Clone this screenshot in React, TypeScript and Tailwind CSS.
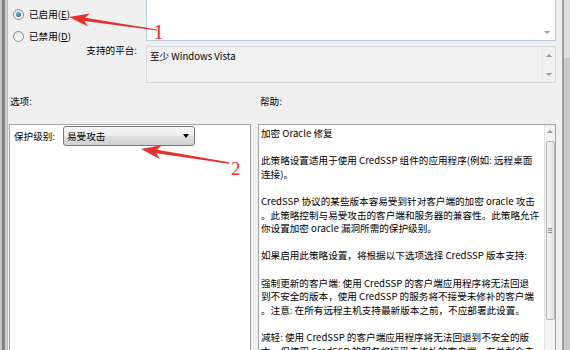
import type { ReactNode } from "react";

const helpLines: string[] = [
  "加密 Oracle 修复",
  "",
  "此策略设置适用于使用 CredSSP 组件的应用程序(例如: 远程桌面",
  "连接)。",
  "",
  "CredSSP 协议的某些版本容易受到针对客户端的加密 oracle 攻击",
  "。此策略控制与易受攻击的客户端和服务器的兼容性。此策略允许",
  "你设置加密 oracle 漏洞所需的保护级别。",
  "",
  "如果启用此策略设置，将根据以下选项选择 CredSSP 版本支持:",
  "",
  "强制更新的客户端: 使用 CredSSP 的客户端应用程序将无法回退",
  "到不安全的版本，使用 CredSSP 的服务将不接受未修补的客户端",
  "。注意: 在所有远程主机支持最新版本之前，不应部署此设置。",
  "",
  "减轻: 使用 CredSSP 的客户端应用程序将无法回退到不安全的版",
  "本，但使用 CredSSP 的服务将接受未修补的客户端。有关剩余未",
];

// tiny scrollbar arrows
const ArrowUp = () => (
  <div className="h-0 w-0 border-x-[3px] border-b-[3px] border-x-transparent border-b-[#9a9a9a]" />
);
const ArrowDown = () => (
  <div className="h-0 w-0 border-x-[3px] border-t-[3px] border-x-transparent border-t-[#9a9a9a]" />
);

function Radio({ checked, children }: { checked?: boolean; children: ReactNode }) {
  return (
    <div className="flex h-[22px] items-center gap-[5px]">
      <div className="flex h-[11px] w-[11px] items-center justify-center rounded-full border border-[#8c8c8c] bg-[linear-gradient(to_bottom,#e6e6e6,#fbfbfb)]">
        {checked && (
          <div className="h-[5px] w-[5px] rounded-full bg-[radial-gradient(circle_at_40%_35%,#6fb3e6,#1d5e9e)]" />
        )}
      </div>
      <span>{children}</span>
    </div>
  );
}

export default function App() {
  return (
    <div className="relative flex h-[350px] w-[570px] overflow-hidden bg-[#f0f0f0] font-['Noto_Sans_CJK_SC',sans-serif] text-[9.6px] leading-[12px] text-black">
      {/* window edge, left */}
      <div className="w-[8px] shrink-0 bg-[linear-gradient(to_right,#c8c8c8_0%,#c8c8c8_22%,#7e7e7e_30%,#8a8a8a_60%,#d2d2d2_70%,#d2d2d2_88%,#9c9c9c_100%)]" />

      {/* dialog body */}
      <div className="flex w-[554px] shrink-0 flex-col pr-[6px]">
        {/* state + platform */}
        <div className="flex">
          <div className="flex w-[138px] flex-col pl-[5px] pt-[3px]">
            <Radio checked>
              已启用(<span className="underline">E</span>)
            </Radio>
            <Radio>
              已禁用(<span className="underline">D</span>)
            </Radio>
            <div className="-mt-[3px] pr-[9px] text-right">支持的平台:</div>
          </div>
          <div className="flex w-[410px] flex-col">
            <div className="flex h-[41px] justify-end border-x border-b border-[#b7cde3] bg-white pb-[6px] pr-[5px]">
              <div className="flex flex-col justify-end">
                <ArrowDown />
              </div>
            </div>
            <div className="mt-[5px] flex h-[37px] border border-[#d3dae0] bg-[#f1f1f1]">
              <div className="flex-1 px-[3px] pt-[3px]">至少 Windows Vista</div>
              <div className="flex w-[13px] flex-col items-center justify-between border-l border-[#e6e6e6] pb-[6px] pt-[7px]">
                <ArrowUp />
                <ArrowDown />
              </div>
            </div>
          </div>
        </div>

        {/* section labels */}
        <div className="mt-[12px] grid grid-cols-[250px_1fr]">
          <div className="pl-[2px]">选项:</div>
          <div className="pl-[2px]">帮助:</div>
        </div>

        {/* options + help panes */}
        <div className="mt-[17px] grid h-[240px] grid-cols-[242px_298px] gap-x-[7px] pl-[1px]">
          <div className="border border-[#a5a5a5] bg-white pl-[4px] pt-[1px]">
            <div className="flex items-center">
              <div className="w-[49px]">保护级别:</div>
              <div className="flex h-[20px] w-[132px] items-center justify-between rounded-[3px] border border-[#7a7a7a] bg-[linear-gradient(to_bottom,#f6f6f6_0%,#ececec_50%,#dedede_52%,#d2d2d2_100%)] pl-[3px] pr-[5px]">
                <span>易受攻击</span>
                <div className="h-0 w-0 border-x-[3.5px] border-t-[4px] border-x-transparent border-t-black" />
              </div>
            </div>
          </div>

          <div className="flex border border-[#a5a5a5] bg-white">
            <div className="flex-1 overflow-hidden pl-[2px] pt-[2px] leading-[13.6px]">
              {helpLines.map((line, i) => (
                <div key={i} className="h-[13.6px] whitespace-pre">
                  {line}
                </div>
              ))}
            </div>
            <div className="flex w-[11px] flex-col items-center border-l border-[#e3e3e3] bg-[#f3f3f3] pt-[5px]">
              <ArrowUp />
              <div className="mt-[8px] flex h-[179px] w-[9px] flex-col items-center justify-center gap-[1px] rounded-[2px] border border-[#b3b3b3] bg-[linear-gradient(to_right,#f4f4f4,#e2e2e2)]">
                <div className="h-px w-[4px] bg-[#8c8c8c]" />
                <div className="h-px w-[4px] bg-[#8c8c8c]" />
                <div className="h-px w-[4px] bg-[#8c8c8c]" />
              </div>
            </div>
          </div>
        </div>
      </div>

      {/* window edge, right */}
      <div className="w-[2px] shrink-0 bg-[#9d9d9d]" />
      <div className="flex w-[6px] shrink-0 flex-col bg-[#dedede]">
        <div className="mt-[58px] flex-1 bg-[#c9c9c9]" />
      </div>

      {/* red annotation arrows */}
      <svg
        className="pointer-events-none absolute left-0 top-0"
        width={570}
        height={350}
        viewBox="0 0 570 350"
      >
        <polygon
          fill="#e8302e"
          points="69,17 89.7,13.5 85.1,17.8 157.1,29.4 156.9,30.6 84.6,20.9 87.8,26.4"
        />
        <polygon
          fill="#e8302e"
          points="141,149 161.9,145.2 157.1,149.7 229.1,162.3 228.9,163.7 156.5,153.3 159.7,159.1"
        />
      </svg>
      <span className="pointer-events-none absolute left-[153px] top-[21px] font-['Liberation_Serif',serif] text-[22px] leading-none text-[#e8302e]">
        1
      </span>
      <span className="pointer-events-none absolute left-[231px] top-[159px] font-['Liberation_Serif',serif] text-[19px] leading-none text-[#e8302e]">
        2
      </span>
    </div>
  );
}
